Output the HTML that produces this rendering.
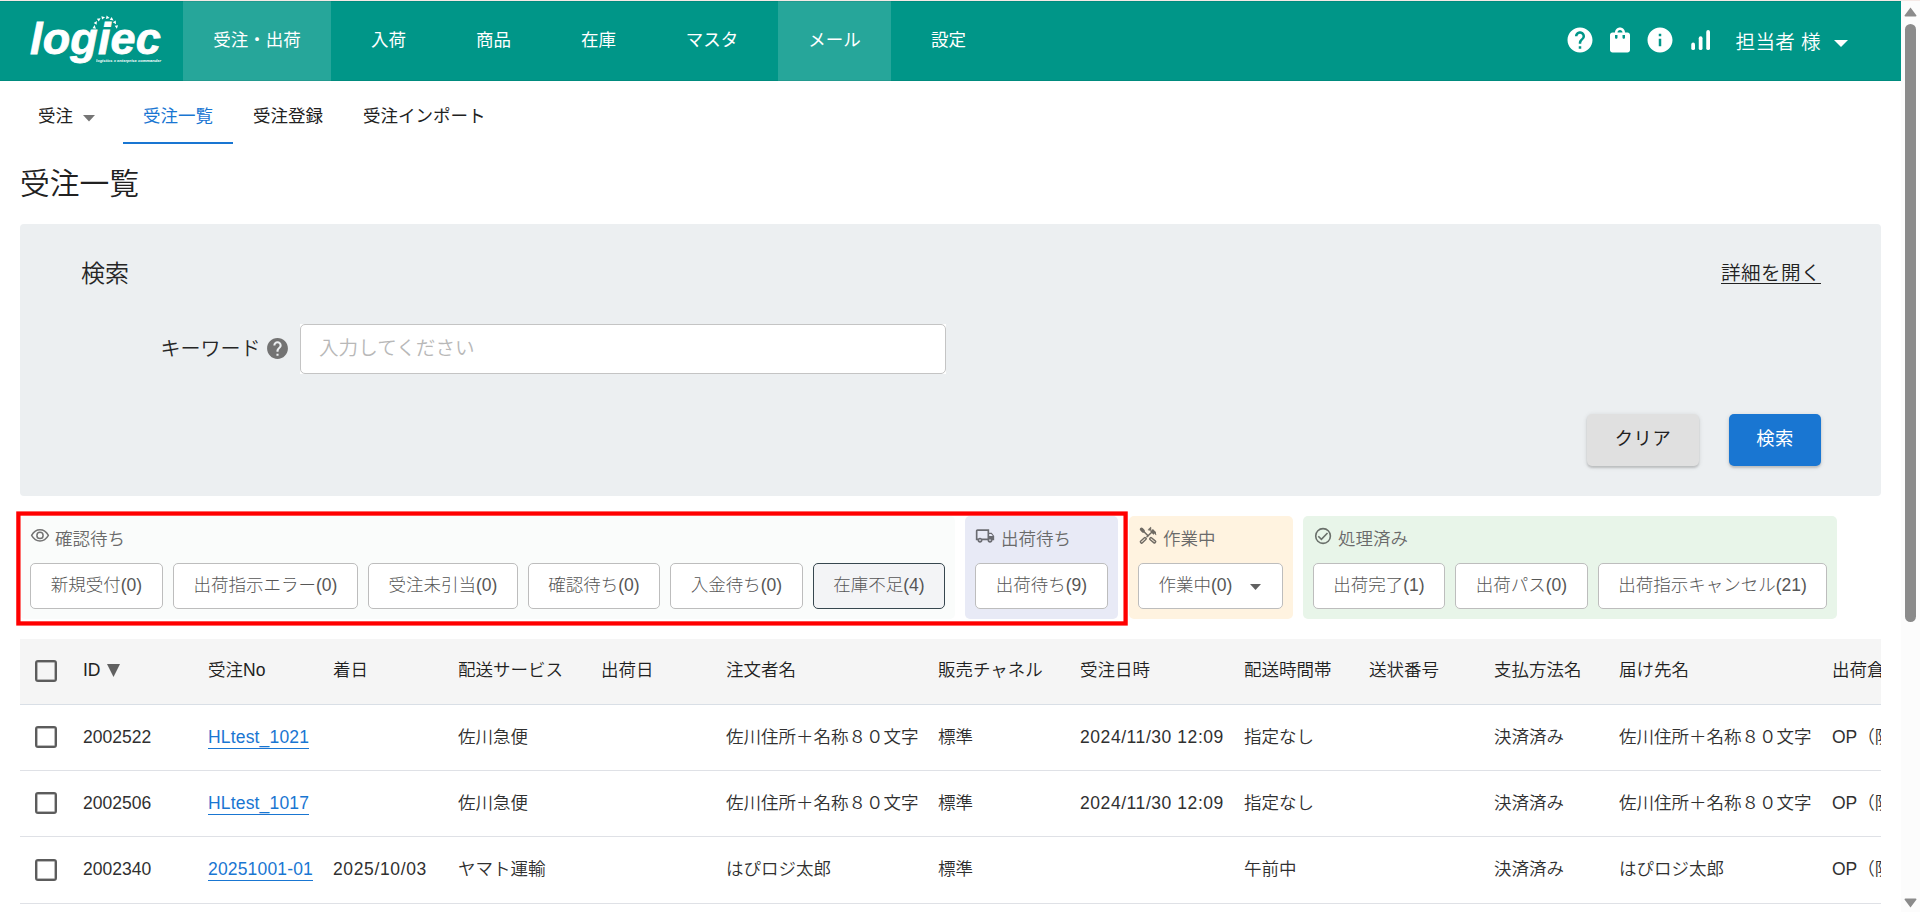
<!DOCTYPE html>
<html lang="ja">
<head>
<meta charset="utf-8">
<title>受注一覧</title>
<style>
*{box-sizing:border-box;margin:0;padding:0}
html,body{width:1920px;height:912px;overflow:hidden;background:#fff}
body{position:relative;font-family:"Liberation Sans","Noto Sans CJK JP",sans-serif;font-size:17.5px;font-weight:350;color:#262626}
.abs{position:absolute}
/* top line */
#topline{left:0;top:0;width:1920px;height:1px;background:#f5e9e6}
/* header */
#hdr{left:0;top:1px;width:1901px;height:80px;background:#009688;color:#fff}
#hdr .tab{position:absolute;top:0;height:80px;line-height:78px;font-weight:400;text-align:center;font-size:17.5px;white-space:nowrap}
#hdr .tab.on{background:#26a69a}
#logo{left:30px;top:12.6px;width:140px;height:60px}
#logo .w{position:absolute;left:0;top:0;font-family:"Liberation Sans",sans-serif;font-weight:bold;font-style:italic;font-size:45px;line-height:50px;letter-spacing:.15px;color:#fff;-webkit-text-stroke:.8px #fff;white-space:nowrap}
#logo .t{position:absolute;left:66px;top:45px;font-family:"Liberation Sans",sans-serif;font-weight:bold;font-style:italic;font-size:12px;line-height:12px;transform:scale(.34);transform-origin:0 0;white-space:nowrap;color:#fff}
#user{left:1735.5px;top:0;height:80px;line-height:83px;font-weight:350;font-size:19.6px;white-space:nowrap;letter-spacing:.3px}
/* sub nav */
.sn{position:absolute;top:81px;height:63px;line-height:71px;font-weight:400;font-size:17.5px;white-space:nowrap;color:#212121}
/* title */
#ttl{left:20px;top:162px;font-size:29.75px;line-height:44px;font-weight:350;color:#212121;white-space:nowrap}
/* search panel */
#sp{left:20px;top:224px;width:1861px;height:271.6px;background:#eceff1;border-radius:4px}
/* status */
.grp{position:absolute;top:516px;height:102.7px;border-radius:5px}
.gl{position:absolute;top:528px;font-size:17.5px;line-height:22px;color:#6a6a6a;font-weight:350;white-space:nowrap}
.sb{position:absolute;top:563px;height:46px;border:1px solid #bdbdbd;border-radius:5px;background:#fff;color:#565656;font-weight:300;font-size:17.5px;line-height:42px;text-align:center;white-space:nowrap}
/* table */
#th{left:20px;top:639px;width:1861px;height:66px;background:#f5f5f5;border-bottom:1px solid #d9dfe6}
.row{position:absolute;left:20px;width:1861px;height:66px;border-bottom:1px solid #dfe1e6;overflow:hidden}
.c{position:absolute;top:0;line-height:64px;font-size:17.5px;white-space:nowrap;color:#303030;font-weight:350}
#th .c{line-height:63px;color:#212121;font-weight:350}
.cb{position:absolute;left:15px;width:22px;height:22px;border:2px solid #5c5c5c;box-shadow:inset 0 0 0 .5px #777;border-radius:3px;background:#fff}
a.lk{letter-spacing:.17px;color:#1976d2;text-decoration:none;border-bottom:1px solid #1976d2;padding-bottom:1px}
/* scrollbar */
#sbar{left:1901px;top:1px;width:19px;height:911px;background:#fcfcfc}
</style>
</head>
<body>
<div id="topline" class="abs"></div>

<div id="hdr" class="abs">
  <div id="logo" class="abs">
    <div class="w">logiec</div>
    <div class="t">logistics x enterprise commander</div>
  </div>
  <svg class="abs" style="left:88px;top:10px" width="36" height="22" viewBox="88 10 36 22"><path fill="#fff" d="M94.67 24.06L92.51 27.21L95.88 27.68zM96.93 20.04L93.70 22.07L96.60 23.84zM100.61 17.25L96.83 17.83L98.79 20.61zM105.09 16.15L101.39 15.18L102.08 18.51zM109.63 16.92L106.63 14.56L105.94 17.89zM113.50 19.44L111.68 16.08L109.73 18.86zM116.05 23.28L115.71 19.48L112.81 21.25zM116.86 27.82L118.06 24.20L114.70 24.67z"/></svg>
  <div class="tab on" style="left:183px;width:148px">受注・出荷</div>
  <div class="tab" style="left:341px;width:95px">入荷</div>
  <div class="tab" style="left:446px;width:95px">商品</div>
  <div class="tab" style="left:551px;width:95px">在庫</div>
  <div class="tab" style="left:656px;width:112px">マスタ</div>
  <div class="tab on" style="left:778px;width:113px">メール</div>
  <div class="tab" style="left:901px;width:95px">設定</div>
  <!-- icons -->
  <svg class="abs" style="left:1565px;top:24px" width="30" height="30" viewBox="0 0 24 24"><path fill="#fff" d="M12 2C6.48 2 2 6.48 2 12s4.480 10 10 10 10-4.480 10-10S17.520 2 12 2zm1 17h-2v-2h2v2zm2.070-7.750l-.9.920C13.450 12.900 13 13.500 13 15h-2v-.5c0-1.100.450-2.100 1.170-2.830l1.240-1.260c.370-.360.590-.860.590-1.410 0-1.100-.9-2-2-2s-2 .9-2 2H8c0-2.210 1.790-4 4-4s4 1.790 4 4c0 .880-.360 1.680-.930 2.250z"/></svg>
  <svg class="abs" style="left:1605px;top:24px" width="30" height="30" viewBox="0 0 24 24"><path fill="#fff" d="M18 6h-2c0-2.210-1.790-4-4-4S8 3.790 8 6H6c-1.100 0-2 .9-2 2v12c0 1.100.9 2 2 2h12c1.100 0 2-.9 2-2V8c0-1.100-.9-2-2-2zm-8 4c0 .550-.450 1-1 1s-1-.450-1-1V8h2v2zm2-6c1.100 0 2 .9 2 2h-4c0-1.100.9-2 2-2zm4 6c0 .550-.450 1-1 1s-1-.450-1-1V8h2v2z"/></svg>
  <svg class="abs" style="left:1645px;top:24px" width="30" height="30" viewBox="0 0 24 24"><path fill="#fff" d="M12 2C6.480 2 2 6.480 2 12s4.480 10 10 10 10-4.480 10-10S17.520 2 12 2zm1 15h-2v-6h2v6zm0-8h-2V7h2v2z"/></svg>
  <svg class="abs" style="left:1684.500px;top:24px" width="30" height="30" viewBox="0 0 24 24"><g fill="#fff"><rect x="5" y="14" width="3" height="6" rx="1.500"/><rect x="11" y="9" width="3" height="11" rx="1.500"/><rect x="17" y="4" width="3" height="16" rx="1.500"/></g></svg>
  <div id="user" class="abs">担当者 様</div>
  <svg class="abs" style="left:1834px;top:39px" width="14" height="8" viewBox="0 0 14 8"><path fill="#fff" d="M0 0h14L7 7z"/></svg>
</div>

<div class="abs" style="left:0;top:1px;width:1901px;height:1px;background:rgba(0,0,0,.07)"></div>
<div class="abs" style="left:0;top:80px;width:1901px;height:1px;background:rgba(0,0,0,.07)"></div>

<!-- sub nav -->
<div class="sn" style="left:38px">受注</div>
<svg class="abs" style="left:83px;top:114.6px" width="12" height="7" viewBox="0 0 12 7"><path fill="#757575" d="M0 0h12L6 6.500z"/></svg>
<div class="sn" style="left:123px;width:110px;text-align:center;color:#1976d2;border-bottom:2px solid #1976d2">受注一覧</div>
<div class="sn" style="left:253px">受注登録</div>
<div class="sn" style="left:363px">受注インポート</div>

<div id="ttl" class="abs">受注一覧</div>

<!-- search panel -->
<div id="sp" class="abs">
  <div class="abs" style="left:61px;top:32px;font-size:24px;line-height:36px;white-space:nowrap">検索</div>
  <div class="abs" style="left:1701px;top:34px;font-size:19.6px;line-height:30px;white-space:nowrap;text-decoration:underline;text-underline-offset:3px;color:#212121;letter-spacing:.4px">詳細を開く</div>
  <div class="abs" style="left:140.6px;top:109px;font-size:20px;line-height:32px;white-space:nowrap">キーワード</div>
  <svg class="abs" style="left:245.200px;top:112px" width="25" height="25" viewBox="0 0 24 24"><path fill="#737373" d="M12 2C6.48 2 2 6.48 2 12s4.480 10 10 10 10-4.480 10-10S17.520 2 12 2zm1 17h-2v-2h2v2zm2.070-7.750l-.9.920C13.450 12.900 13 13.500 13 15h-2v-.5c0-1.100.450-2.100 1.170-2.830l1.240-1.260c.370-.360.590-.860.590-1.410 0-1.100-.9-2-2-2s-2 .9-2 2H8c0-2.210 1.790-4 4-4s4 1.790 4 4c0 .880-.360 1.680-.930 2.250z"/></svg>
  <div class="abs" style="left:280px;top:100px;width:646px;height:50px;background:#fff"></div>
  <div class="abs" style="left:280px;top:100px;width:646px;height:50px;background:#fff;border:1px solid #c4c4c4;border-radius:5px;padding-left:18px;font-size:19.6px;line-height:47.500px;color:#b8b8b8;white-space:nowrap">入力してください</div>
  <div class="abs" style="left:1567px;top:190px;width:112px;height:52px;background:#e0e0e0;border-radius:5px;box-shadow:0 2px 2px rgba(0,0,0,.14),0 1px 5px rgba(0,0,0,.12);text-align:center;font-size:18.3px;font-weight:400;letter-spacing:.5px;line-height:50.5px;color:#212121">クリア</div>
  <div class="abs" style="left:1709px;top:190px;width:92px;height:52px;background:#1976d2;border-radius:5px;box-shadow:0 2px 2px rgba(0,0,0,.14),0 1px 5px rgba(0,0,0,.12);text-align:center;font-size:18.3px;font-weight:400;letter-spacing:.5px;line-height:50.5px;color:#fff">検索</div>
</div>

<!-- status groups -->
<div class="grp" style="left:20px;width:935px;background:#fafcfb"></div>
<div class="grp" style="left:965px;width:153px;background:#e8eaf6"></div>
<div class="grp" style="left:1128.500px;width:164.500px;background:#fff3e0"></div>
<div class="grp" style="left:1303px;width:534px;background:#e8f5e9"></div>
<svg class="abs" style="left:10px;top:505px" width="1130" height="130" viewBox="10 505 1130 130"><rect x="18.400" y="513.550" width="1107.200" height="109.900" fill="none" stroke="#ff0000" stroke-width="4.300"/></svg>


<!-- group icons -->
<svg class="abs" style="left:28px;top:524px" width="24" height="22" viewBox="28 524 24 22"><g fill="none" stroke="#737373" stroke-width="1.5"><path d="M31.600 535.400C34.400 530.600 37.500 529.800 40 529.800C42.500 529.800 45.600 530.600 48.400 535.400C45.600 540.200 42.500 541 40 541C37.500 541 34.400 540.200 31.600 535.400z" stroke-linejoin="round"/><circle cx="40" cy="535.450" r="3.100"/></g></svg>
<svg class="abs" style="left:975.200px;top:525.700px" width="20" height="20" viewBox="0 0 24 24"><path fill="#6b6c72" d="M20 8h-3V4H3c-1.100 0-2 .9-2 2v11h2c0 1.660 1.340 3 3 3s3-1.340 3-3h6c0 1.660 1.340 3 3 3s3-1.340 3-3h2v-5l-3-4zm-.5 1.500l1.960 2.500H17V9.500h2.500zM6 18c-.55 0-1-.45-1-1s.45-1 1-1 1 .45 1 1-.45 1-1 1zm2.220-3c-.55-.61-1.330-1-2.220-1s-1.670.39-2.220 1H3V6h12v9H8.220zM18 18c-.55 0-1-.45-1-1s.45-1 1-1 1 .45 1 1-.45 1-1 1z"/><path fill="#6b6c72" d="M16.500 12.500H22.500V16.500H20.600C20.100 15.600 19.100 15 18 15S15.900 15.600 16.500 16.500z"/></svg>
<svg class="abs" style="left:1136px;top:524px" width="24" height="24" viewBox="1136 524 24 24"><g stroke="#6f6a63" fill="none" stroke-linecap="round" stroke-linejoin="round"><path d="M1141.500 529.300L1143.200 531" stroke-width="3.400"/><path d="M1143.500 531.200L1148 535.800" stroke-width="1.500"/><rect x="-3.350" y="-1.150" width="6.700" height="2.300" rx="0.700" transform="translate(1152.700 540.300) rotate(40)" stroke-width="1.400"/><path d="M1151.600 530.300L1154.800 533.500" stroke-width="3.600" stroke-linecap="butt"/><path d="M1148.200 529.600L1150.800 527.100L1151 530.600z" fill="#6f6a63" stroke-width=".6"/><path d="M1155.200 532.200L1155.800 534.700" stroke-width="1"/><path d="M1151.500 532.500L1147 536.700" stroke-width="1.500"/><rect x="-3.350" y="-1.150" width="6.700" height="2.300" rx="0.700" transform="translate(1143.300 540.300) rotate(-43)" stroke-width="1.400"/></g></svg>
<svg class="abs" style="left:1311px;top:524px" width="24" height="24" viewBox="1311 524 24 24"><g fill="none" stroke="#6a706b" stroke-width="1.600"><circle cx="1323.050" cy="536" r="7.350"/><path d="M1318.300 536.300L1321.400 539.400L1327.500 533"/></g></svg>
<div class="gl" style="left:55px">確認待ち</div>
<div class="gl" style="left:1001px">出荷待ち</div>
<div class="gl" style="left:1163px">作業中</div>
<div class="gl" style="left:1338px">処理済み</div>

<div class="sb" style="left:30px;width:133px">新規受付(0)</div>
<div class="sb" style="left:173px;width:185px">出荷指示エラー(0)</div>
<div class="sb" style="left:368px;width:150px">受注未引当(0)</div>
<div class="sb" style="left:528px;width:132px">確認待ち(0)</div>
<div class="sb" style="left:670px;width:133px">入金待ち(0)</div>
<div class="sb" style="left:813px;width:132px;border-color:#37474f;background:#f3f4f6">在庫不足(4)</div>
<div class="sb" style="left:975px;width:133px">出荷待ち(9)</div>
<div class="sb" style="left:1138px;width:145px;text-align:left;padding-left:19.500px">作業中(0)</div>
<div class="sb" style="left:1313px;width:132px">出荷完了(1)</div>
<div class="sb" style="left:1455px;width:133px">出荷パス(0)</div>
<div class="sb" style="left:1598px;width:229px">出荷指示キャンセル(21)</div>
<svg class="abs" style="left:1250px;top:584px" width="11" height="6" viewBox="0 0 11 6"><path fill="#616161" d="M0 0h11L5.500 6z"/></svg>

<!-- table -->
<div id="th" class="abs" style="overflow:hidden">
  <div class="cb" style="top:21px;background:transparent"></div>
  <div class="c" style="left:63px">ID</div>
  <div class="c" style="left:188px">受注No</div>
  <div class="c" style="left:313px">着日</div>
  <div class="c" style="left:438px">配送サービス</div>
  <div class="c" style="left:581px">出荷日</div>
  <div class="c" style="left:706px">注文者名</div>
  <div class="c" style="left:918px">販売チャネル</div>
  <div class="c" style="left:1060px">受注日時</div>
  <div class="c" style="left:1224px">配送時間帯</div>
  <div class="c" style="left:1349px">送状番号</div>
  <div class="c" style="left:1474px">支払方法名</div>
  <div class="c" style="left:1599px">届け先名</div>
  <div class="c" style="left:1812px">出荷倉庫</div>
</div>
<svg class="abs" style="left:107px;top:664px" width="13" height="13" viewBox="0 0 13 13"><path fill="#616161" d="M0 0h13L6.500 13z"/></svg>

<div class="row" style="top:705px">
  <div class="cb" style="top:21px"></div>
  <div class="c" style="left:63px">2002522</div>
  <div class="c" style="left:188px"><a class="lk">HLtest_1021</a></div>
  <div class="c" style="left:438px">佐川急便</div>
  <div class="c" style="left:706px">佐川住所＋名称８０文字</div>
  <div class="c" style="left:918px">標準</div>
  <div class="c" style="left:1060px;letter-spacing:.56px">2024/11/30 12:09</div>
  <div class="c" style="left:1224px">指定なし</div>
  <div class="c" style="left:1474px">決済済み</div>
  <div class="c" style="left:1599px">佐川住所＋名称８０文字</div>
  <div class="c" style="left:1812px">OP（防府倉庫）</div>
</div>
<div class="row" style="top:771px">
  <div class="cb" style="top:21px"></div>
  <div class="c" style="left:63px">2002506</div>
  <div class="c" style="left:188px"><a class="lk">HLtest_1017</a></div>
  <div class="c" style="left:438px">佐川急便</div>
  <div class="c" style="left:706px">佐川住所＋名称８０文字</div>
  <div class="c" style="left:918px">標準</div>
  <div class="c" style="left:1060px;letter-spacing:.56px">2024/11/30 12:09</div>
  <div class="c" style="left:1224px">指定なし</div>
  <div class="c" style="left:1474px">決済済み</div>
  <div class="c" style="left:1599px">佐川住所＋名称８０文字</div>
  <div class="c" style="left:1812px">OP（防府倉庫）</div>
</div>
<div class="row" style="top:837px;height:67px">
  <div class="cb" style="top:22px"></div>
  <div class="c" style="left:63px">2002340</div>
  <div class="c" style="left:188px"><a class="lk">20251001-01</a></div>
  <div class="c" style="left:313px;letter-spacing:.64px">2025/10/03</div>
  <div class="c" style="left:438px">ヤマト運輸</div>
  <div class="c" style="left:706px">はぴロジ太郎</div>
  <div class="c" style="left:918px">標準</div>
  <div class="c" style="left:1224px">午前中</div>
  <div class="c" style="left:1474px">決済済み</div>
  <div class="c" style="left:1599px">はぴロジ太郎</div>
  <div class="c" style="left:1812px">OP（防府倉庫）</div>
</div>

<!-- scrollbar -->
<div id="sbar" class="abs">
  <svg class="abs" style="left:3px;top:6px" width="13" height="10" viewBox="0 0 13 10"><path fill="#8b8b8b" d="M6.500 .5L12.500 8.500Q12.500 9.500 11.500 9.500H1.500Q.5 9.500 .5 8.500z"/></svg>
  <div class="abs" style="left:4px;top:23px;width:11px;height:598px;border-radius:5.5px;background:#8b8b8b"></div>
  <svg class="abs" style="left:3px;top:897px" width="13" height="10" viewBox="0 0 13 10"><path fill="#8b8b8b" d="M6.500 9.500L12.500 1.500Q12.500 .5 11.500 .5H1.500Q.5 .5 .5 1.500z"/></svg>
</div>
</body>
</html>
